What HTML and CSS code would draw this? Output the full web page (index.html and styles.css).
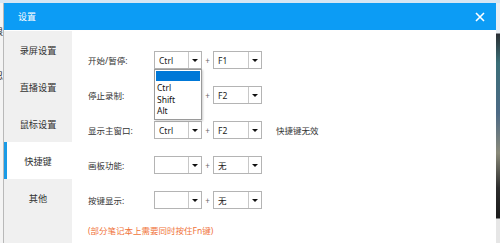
FILE: index.html
```html
<!DOCTYPE html>
<html lang="zh-CN">
<head>
    <meta charset="UTF-8">
    <title>设置</title>
    <link rel="stylesheet" href="styles.css">
</head>
<body>
    <div class="screen">
        <div class="bg-left">
            <span class="frag frag-a">狠</span>
            <span class="frag frag-b">忍</span>
        </div>
        <div class="window">
            <div class="titlebar">
                <span class="title">设置</span>
                <svg class="close" width="10" height="10" viewBox="0 0 10 10">
                    <path d="M1 1 L9 9 M9 1 L1 9" stroke="#fff" stroke-width="1.6" fill="none"/>
                </svg>
            </div>
            <div class="body">
                <ul class="sidebar">
                    <li>录屏设置</li>
                    <li>直播设置</li>
                    <li>鼠标设置</li>
                    <li class="active">快捷键</li>
                    <li>其他</li>
                </ul>
                <div class="content">
                    <div class="row">
                        <label>开始/暂停:</label>
                        <div class="select mod open">
                            <span class="val">Ctrl</span>
                            <span class="arrow"></span>
                            <ul class="dropdown">
                                <li class="hl">&nbsp;</li>
                                <li>Ctrl</li>
                                <li>Shift</li>
                                <li>Alt</li>
                            </ul>
                        </div>
                        <span class="plus">+</span>
                        <div class="select key">
                            <span class="val">F1</span>
                            <span class="arrow"></span>
                        </div>
                    </div>
                    <div class="row">
                        <label>停止录制:</label>
                        <div class="select mod">
                            <span class="val">Ctrl</span>
                            <span class="arrow"></span>
                        </div>
                        <span class="plus">+</span>
                        <div class="select key">
                            <span class="val">F2</span>
                            <span class="arrow"></span>
                        </div>
                    </div>
                    <div class="row">
                        <label>显示主窗口:</label>
                        <div class="select mod">
                            <span class="val">Ctrl</span>
                            <span class="arrow"></span>
                        </div>
                        <span class="plus">+</span>
                        <div class="select key">
                            <span class="val">F2</span>
                            <span class="arrow"></span>
                        </div>
                        <span class="warn">快捷键无效</span>
                    </div>
                    <div class="row">
                        <label>画板功能:</label>
                        <div class="select mod">
                            <span class="val"></span>
                            <span class="arrow"></span>
                        </div>
                        <span class="plus">+</span>
                        <div class="select key">
                            <span class="val">无</span>
                            <span class="arrow"></span>
                        </div>
                    </div>
                    <div class="row">
                        <label>按键显示:</label>
                        <div class="select mod">
                            <span class="val"></span>
                            <span class="arrow"></span>
                        </div>
                        <span class="plus">+</span>
                        <div class="select key">
                            <span class="val">无</span>
                            <span class="arrow"></span>
                        </div>
                    </div>
                    <p class="note">(部分笔记本上需要同时按住Fn键)</p>
                </div>
            </div>
        </div>
        <div class="bg-right"></div>
    </div>
</body>
</html>
```

FILE: styles.css
```css
body {
    margin: 0;
    overflow: hidden;
    font-family: "Noto Sans", "Noto Sans CJK SC", sans-serif;
    background-color: #d6e6f4;
}

.screen {
    display: flex;
    height: 243px;
    padding-top: 3px;
    box-sizing: border-box;
}

.bg-left {
    width: 3px;
    background-color: #f4f4f4;
    overflow: hidden;
    position: relative;
    border-right: 1px solid #b9b9b9;
}

.frag {
    position: absolute;
    left: -6px;
    font-size: 9px;
    color: #222;
}

.frag-a {
    top: 22px;
}

.frag-b {
    top: 66px;
}

.window {
    width: 492px;
    display: flex;
    flex-direction: column;
    background-color: #fff;
}

.titlebar {
    height: 27px;
    background-color: #0c9cf5;
    display: flex;
    align-items: center;
    justify-content: space-between;
    padding: 0 11px 0 14px;
    flex-shrink: 0;
}

.title {
    color: #fff;
    font-size: 9px;
}

.body {
    display: flex;
    flex: 1;
    padding-top: 1px;
}

.sidebar {
    list-style: none;
    margin: 0;
    padding: 0;
    width: 68px;
    background-color: #f0f0f0;
}

.sidebar li {
    height: 37px;
    display: flex;
    align-items: center;
    justify-content: center;
    font-size: 9.2px;
    color: #333;
}

.sidebar li.active {
    background-color: #fff;
    box-shadow: inset 3px 0 0 #1a9be6;
}

.content {
    flex: 1;
    padding: 20px 0 0 16px;
    font-size: 8.5px;
    color: #333;
}

.row {
    display: flex;
    align-items: center;
    height: 18px;
    margin-bottom: 17px;
}

.row label {
    width: 66px;
}

.select {
    position: relative;
    height: 18px;
    box-sizing: border-box;
    border: 1px solid #b4b4b4;
    background-color: #fff;
    display: flex;
    align-items: center;
}

.select.mod {
    width: 48px;
}

.select.key {
    width: 49px;
}

.val {
    flex: 1;
    padding-left: 4px;
    font-size: 8.5px;
    color: #222;
}

.arrow {
    width: 12px;
    height: 100%;
    border-left: 1px solid #c8c8c8;
    display: flex;
    align-items: center;
    justify-content: center;
}

.arrow::after {
    content: "";
    border-left: 3px solid transparent;
    border-right: 3px solid transparent;
    border-top: 3.5px solid #111;
}

.plus {
    width: 11px;
    text-align: center;
    color: #666;
    font-size: 8px;
}

.warn {
    margin-left: 14px;
}

.dropdown {
    position: absolute;
    top: 17px;
    left: -1px;
    width: 48px;
    margin: 0;
    padding: 1px 0 2px;
    list-style: none;
    background-color: #fff;
    border: 1px solid #9a9a9a;
    box-sizing: border-box;
    box-shadow: 1px 1px 2px rgba(0, 0, 0, 0.2);
    z-index: 2;
}

.dropdown li {
    height: 11.5px;
    line-height: 11.5px;
    padding-left: 2px;
    font-size: 8.5px;
    color: #111;
}

.dropdown li.hl {
    background-color: #0078d7;
    height: 10px;
    margin: 0 1px 1px;
}

.note {
    margin: -2px 0 0;
    color: #f0743a;
    font-size: 8.5px;
}

.bg-right {
    width: 4px;
    background: linear-gradient(#e8eef4 0, #e8eef4 30px, #2b2f33 31px, #3b6f78 60px, #4d6a85 110px, #8a8a7a 150px, #2c2c2c 185px, #1b1b1b 215px, #e6e6e6 216px);
}
```
